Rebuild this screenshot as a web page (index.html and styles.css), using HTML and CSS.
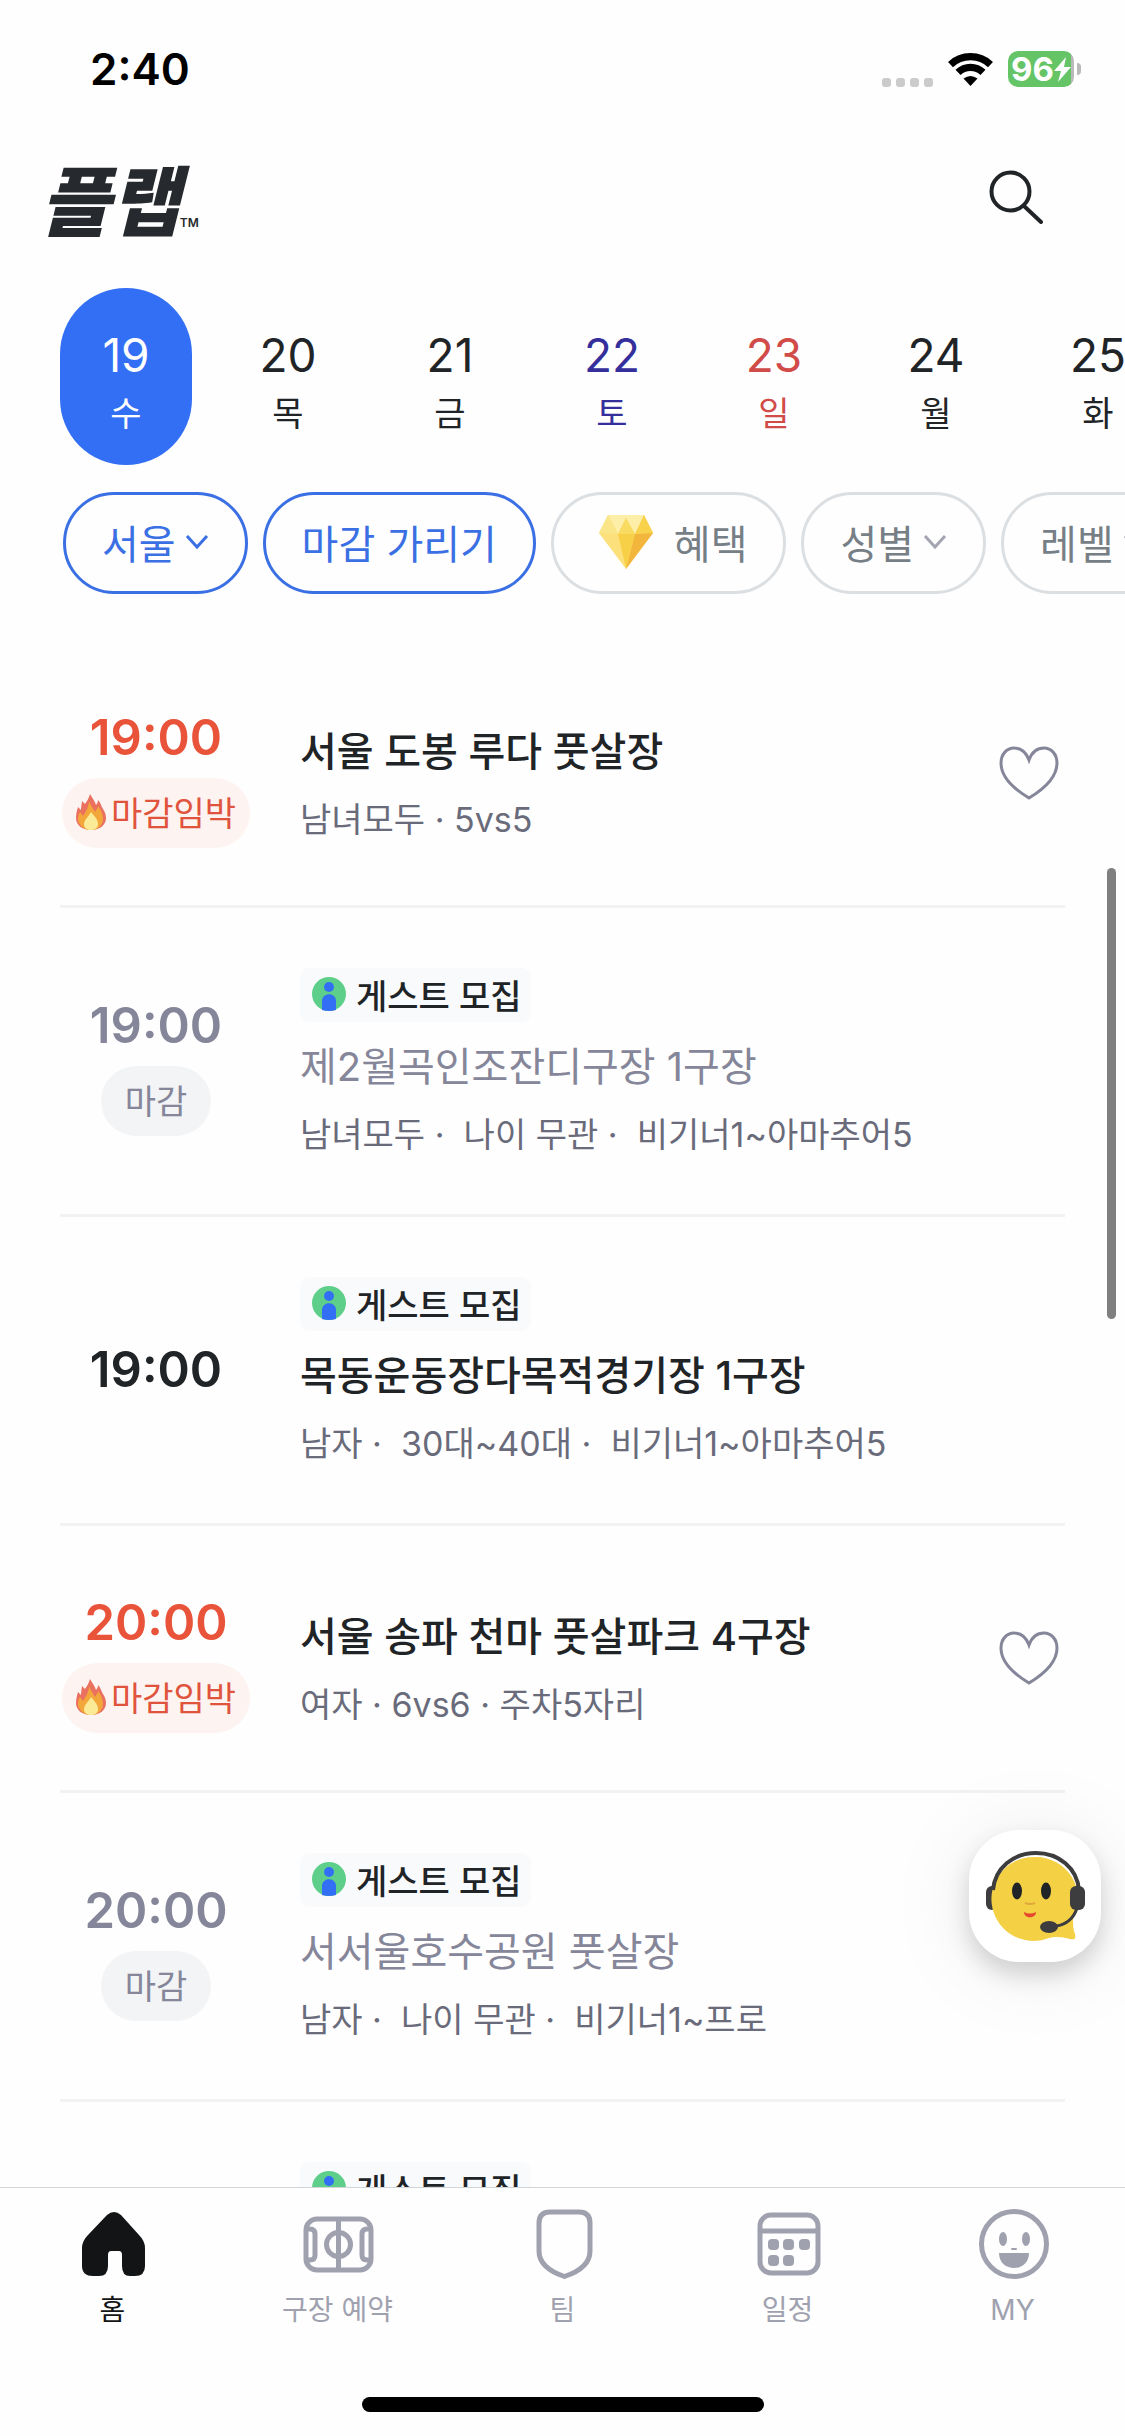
FILE: index.html
```html
<!DOCTYPE html>
<html lang="ko">
<head>
<meta charset="utf-8">
<meta name="viewport" content="width=device-width, initial-scale=1">
<title>플랩</title>
<link rel="stylesheet" href="styles.css">
</head>
<body>
<svg class="defs" aria-hidden="true">
  <symbol id="chevron" viewBox="0 0 24 24"><path d="M2 6l10 11L22 6" fill="none" stroke="currentColor" stroke-width="3"/></symbol>
  <symbol id="fire" viewBox="0 0 30 36">
    <path d="M14 0c2 4 5 7 6 11 1-1 2-3 2-5 3 3 3 6 5 9 2 3 3 6 3 9 0 7-6 12-15 12S0 31 0 24c0-4 1-8 2-11l3 3c0-4 1-7 1-9l3 3c2-3 4-6 5-10z" fill="#ea7060"/>
    <path d="M13 7c1 4 4 7 6 11 1-2 3-4 3-6 3 4 5 8 5 13 0 6-5 11-12 11S2 31 2 25c0-3 1-5 2-7l3 4c3-5 6-9 6-15z" fill="#f3a73a"/>
    <path d="M15 18c3 4 7 7 7 12 0 4-3 6-7 6s-7-2-7-6c0-4 5-8 7-12z" fill="#fbeb96"/>
  </symbol>
  <symbol id="guest" viewBox="0 0 34 34">
    <circle cx="17" cy="17" r="17" fill="#5ecf8a"/>
    <circle cx="17" cy="10" r="5" fill="#336ff5"/>
    <path d="M10 33V24c0-9 14-9 14 0v9q-7 2-14 0z" fill="#336ff5"/>
  </symbol>
  <symbol id="heart" viewBox="0 0 60 54"><path d="M30 14C26 3 19 2 15 2 8 2 2 8 2 17c0 14 13 26 28 35 15-9 28-21 28-35 0-9-6-15-13-15-4 0-11 1-15 12z" fill="none" stroke="currentColor" stroke-width="3"/></symbol>
</svg>

<div class="app">
  <div class="status">
    <span class="clock">2:40</span>
    <div class="signals">
      <svg width="51" height="9" viewBox="0 0 51 9" class="dots" fill="#cbcbcb"><rect width="9" height="9" rx="3"/><rect x="14" width="9" height="9" rx="3"/><rect x="28" width="9" height="9" rx="3"/><rect x="42" width="9" height="9" rx="3"/></svg>
      <svg width="45" height="33" viewBox="0 0 45 33"><path d="M2.500 11.600A29.300 29.300 0 0 1 42.500 11.600M10 19.400A18 18 0 0 1 35 19.400" fill="none" stroke="#000" stroke-width="7.200"/><path d="M22.500 33l-7-7.500q7-5 14 0z"/></svg>
      <span class="battery"><span class="level">96<svg width="17" height="25" viewBox="0 0 17 25" fill="#fff"><path d="M12 0L0 14h7L4 25 17 10h-7z"/></svg></span></span>
    </div>
  </div>

  <header class="header">
    <a class="logo" href="#">플랩<span class="tm">TM</span></a>
    <button class="icon-button" aria-label="검색"><svg width="54" height="54" viewBox="0 0 54 54" fill="none" stroke="#212427" stroke-width="4" stroke-linecap="round"><circle cx="21.500" cy="21.500" r="19"/><path d="M35 36l17 16"/></svg></button>
  </header>

  <nav class="dates" aria-label="날짜">
    <button class="date selected"><span class="day">19</span><span class="weekday">수</span></button>
    <button class="date"><span class="day">20</span><span class="weekday">목</span></button>
    <button class="date"><span class="day">21</span><span class="weekday">금</span></button>
    <button class="date saturday"><span class="day">22</span><span class="weekday">토</span></button>
    <button class="date sunday"><span class="day">23</span><span class="weekday">일</span></button>
    <button class="date"><span class="day">24</span><span class="weekday">월</span></button>
    <button class="date"><span class="day">25</span><span class="weekday">화</span></button>
  </nav>

  <div class="filters">
    <button class="filter active">서울<svg class="chevron"><use href="#chevron"/></svg></button>
    <button class="filter active">마감 가리기</button>
    <button class="filter benefit"><svg width="54" height="54" viewBox="0 0 54 54"><path d="M9 0h36l9 18-27 36L0 18z" fill="#fbe07c"/><path d="M9 0h36l-9 19-9-16-8 16z" fill="#fdeea8"/><path d="M0 18L9 0l10 19z" fill="#fae588"/><path d="M45 0l9 18-18 1z" fill="#f9d24c"/><path d="M27 3l9 16H19z" fill="#fadb62"/><path d="M19 19h17l-9 35z" fill="#f8d048"/><path d="M36 19l18-1-27 36z" fill="#f2b63c"/></svg>혜택</button>
    <button class="filter">성별<svg class="chevron"><use href="#chevron"/></svg></button>
    <button class="filter">레벨<svg class="chevron"><use href="#chevron"/></svg></button>
  </div>

  <main class="matches">
    <ul class="list">
      <li class="match urgent">
        <div class="when"><time>19:00</time><span class="badge"><svg width="30" height="36"><use href="#fire"/></svg>마감임박</span></div>
        <div class="info"><h2>서울 도봉 루다 풋살장</h2><p>남녀모두 · 5vs5</p></div>
        <button class="icon-button like" aria-label="찜하기"><svg width="60" height="54"><use href="#heart"/></svg></button>
      </li>
      <li class="match closed">
        <div class="when"><time>19:00</time><span class="badge">마감</span></div>
        <div class="info"><span class="guest"><svg width="34" height="34"><use href="#guest"/></svg>게스트 모집</span><h2>제2월곡인조잔디구장 1구장</h2><p>남녀모두 ·&nbsp; 나이 무관 ·&nbsp; 비기너1~아마추어5</p></div>
      </li>
      <li class="match">
        <div class="when"><time>19:00</time></div>
        <div class="info"><span class="guest"><svg width="34" height="34"><use href="#guest"/></svg>게스트 모집</span><h2>목동운동장다목적경기장 1구장</h2><p>남자 ·&nbsp; 30대~40대 ·&nbsp; 비기너1~아마추어5</p></div>
      </li>
      <li class="match urgent">
        <div class="when"><time>20:00</time><span class="badge"><svg width="30" height="36"><use href="#fire"/></svg>마감임박</span></div>
        <div class="info"><h2>서울 송파 천마 풋살파크 4구장</h2><p>여자 · 6vs6 · 주차5자리</p></div>
        <button class="icon-button like" aria-label="찜하기"><svg width="60" height="54"><use href="#heart"/></svg></button>
      </li>
      <li class="match closed">
        <div class="when"><time>20:00</time><span class="badge">마감</span></div>
        <div class="info"><span class="guest"><svg width="34" height="34"><use href="#guest"/></svg>게스트 모집</span><h2>서서울호수공원 풋살장</h2><p>남자 ·&nbsp; 나이 무관 ·&nbsp; 비기너1~프로</p></div>
      </li>
      <li class="match">
        <div class="when"></div>
        <div class="info"><span class="guest"><svg width="34" height="34"><use href="#guest"/></svg>게스트 모집</span></div>
      </li>
    </ul>
    <button class="support" aria-label="고객센터"><svg width="132" height="132" viewBox="0 0 132 132">
      <rect x="17" y="56" width="12" height="24" rx="6" fill="#3d3d3f"/>
      <path d="M67 27a42 42 0 1 0 10 82c8-3 16-2 24 0 5 1 6-1 5-5-2-5-2-9-2-15A42 42 0 0 0 67 27z" fill="#f4d045"/>
      <path d="M24 60C26 38 44 23 67 23s41 15 43 37" fill="none" stroke="#3d3d3f" stroke-width="4"/>
      <path d="M108 78c-3 10-11 17-21 18" fill="none" stroke="#3d3d3f" stroke-width="3"/>
      <rect x="101" y="56" width="15" height="24" rx="6" fill="#3d3d3f"/>
      <ellipse cx="80" cy="97" rx="9" ry="6" fill="#3d3d3f"/>
      <ellipse cx="48" cy="61" rx="5" ry="8.500" fill="#212427"/><ellipse cx="77" cy="61" rx="5" ry="8.500" fill="#212427"/>
      <path d="M56 73q5 2 10 0" fill="none" stroke="#e0a83c" stroke-width="2"/>
      <path d="M55 82q6 3 12 0c0 7-12 7-12 0z" fill="#e5472f"/>
    </svg></button>
    <div class="scrollbar"></div>
  </main>

  <footer class="bottom">
    <nav class="tabs" aria-label="메뉴">
      <a href="#" class="tab current"><svg class="tab-icon" viewBox="0 0 72 72"><path d="M30 7q7-6 14 0l18 20q6 6 6 13v18q0 10-10 10h-5q-8 0-8-10V47q0-4-3-4h-8q-3 0-3 4v11q0 10-9 10h-6Q5 68 5 58V40q0-7 6-13z" fill="currentColor"/></svg>홈</a>
      <a href="#" class="tab"><svg class="tab-icon" viewBox="0 0 72 72" fill="none" stroke="currentColor" stroke-width="5"><rect x="4" y="11" width="65" height="51" rx="11"/><path d="M36.500 11v51M4 21h4q5 0 5 5v21q0 5-5 5H4M69 21h-4q-5 0-5 5v21q0 5 5 5h4"/><circle cx="36.500" cy="36.500" r="12"/></svg>구장 예약</a>
      <a href="#" class="tab"><svg class="tab-icon" viewBox="0 0 72 72" fill="none" stroke="currentColor" stroke-width="5"><path d="M12 15q0-11 11-11h29q11 0 11 11v28c0 13-12 21-25.500 25.500C24 64 12 56 12 43z"/></svg>팀</a>
      <a href="#" class="tab"><svg class="tab-icon" viewBox="0 0 72 72" fill="none" stroke="currentColor" stroke-width="5"><rect x="8" y="7" width="58" height="58" rx="11"/><path d="M8 23h58"/><g fill="currentColor" stroke="none"><rect x="16" y="31" width="11" height="11" rx="4"/><rect x="31" y="31" width="11" height="11" rx="4"/><rect x="47" y="31" width="11" height="11" rx="4"/><rect x="16" y="47" width="11" height="11" rx="4"/><rect x="31" y="47" width="11" height="11" rx="4"/></g></svg>일정</a>
      <a href="#" class="tab"><svg class="tab-icon" viewBox="0 0 72 72"><circle cx="37" cy="36" r="32.500" fill="none" stroke="currentColor" stroke-width="5"/><g fill="currentColor"><ellipse cx="26" cy="31" rx="4" ry="7"/><ellipse cx="49" cy="31" rx="4" ry="7"/><rect x="34" y="40" width="6" height="2" rx="1"/><path d="M22 45h30c0 20-30 20-30 0z"/></g></svg>MY</a>
    </nav>
    <div class="home-indicator"></div>
  </footer>
</div>
</body>
</html>
```
FILE: styles.css
```css
* {
  box-sizing: border-box;
}

body {
  margin: 0;
  background: #fefefe;
  color: #212427;
  font-family: Inter, "Noto Sans CJK KR", sans-serif;
}

button {
  padding: 0;
  border: 0;
  background: none;
  color: inherit;
  font: inherit;
}

a {
  color: inherit;
  text-decoration: none;
}

svg {
  display: block;
  flex: none;
}

.defs {
  display: none;
}

.app {
  display: flex;
  flex-direction: column;
  height: 100vh;
  overflow: hidden;
}

/* Status bar */
.status {
  display: flex;
  align-items: center;
  justify-content: space-between;
  height: 138px;
  padding: 0 44px 0 90px;
  color: #000;
}

.clock {
  font-size: 44px;
  font-weight: 600;
}

.signals {
  display: flex;
  align-items: center;
  gap: 15px;
}

.dots {
  align-self: flex-end;
}

.battery {
  display: flex;
  align-items: center;
  gap: 3px;
}

.battery::after {
  content: "";
  width: 4px;
  height: 12px;
  border-radius: 0 4px 4px 0;
  background: #b9b9b9;
}

.level {
  display: flex;
  align-items: center;
  justify-content: center;
  width: 66px;
  height: 36px;
  border-radius: 10px;
  background: linear-gradient(90deg, #65c466 95%, #b9b9b9 95%);
  color: #fff;
  font-size: 33px;
  font-weight: 700;
}

/* Header */
.header {
  display: flex;
  align-items: center;
  justify-content: space-between;
  height: 120px;
  padding: 0 82px 2px 40px;
}

.logo {
  display: flex;
  align-items: flex-end;
  color: #26292d;
  font-family: "Noto Sans CJK KR", sans-serif;
  font-size: 76px;
  font-style: italic;
  font-weight: 900;
  line-height: 68px;
}

.tm {
  font-family: Inter, sans-serif;
  font-size: 12px;
  font-style: normal;
  font-weight: 600;
  line-height: 16px;
}

/* Date strip */
.dates {
  display: flex;
  gap: 30px;
  padding: 30px 0 0 60px;
}

.date {
  display: flex;
  flex: none;
  flex-direction: column;
  align-items: center;
  justify-content: center;
  width: 132px;
  height: 177px;
  padding-top: 8px;
  border-radius: 66px;
}

.day {
  font-size: 46px;
  line-height: 66px;
}

.weekday {
  font-size: 34px;
  line-height: 51px;
}

.selected {
  background: #336ff5;
  color: #fff;
}

.saturday {
  color: #352f9c;
}

.sunday {
  color: #d14b48;
}

/* Filters */
.filters {
  display: flex;
  gap: 15px;
  padding: 27px 0 47px 63px;
}

.filter {
  display: flex;
  flex: none;
  align-items: center;
  gap: 9px;
  height: 102px;
  padding: 0 36px 3px;
  border: 3px solid #dcdfe2;
  border-radius: 51px;
  color: #777f86;
  font-size: 40px;
}

.active {
  border-color: #3b70e4;
  color: #3b70e4;
}

.benefit {
  gap: 21px;
  padding-left: 45px;
}

.chevron {
  width: 24px;
  height: 24px;
}

.filter:not(.active) .chevron {
  color: #a4a5b2;
}

/* Match list */
.matches {
  position: relative;
  flex: 1;
  min-height: 0;
  overflow: hidden;
}

.list {
  margin: 0;
  padding: 0 60px;
  list-style: none;
}

.match {
  display: grid;
  grid-template-columns: 192px 1fr auto;
  align-items: center;
  column-gap: 48px;
  padding: 57px 0;
  border-bottom: 3px solid #f0f2f3;
}

.when {
  display: flex;
  flex-direction: column;
  align-items: center;
}

.when time {
  font-size: 49px;
  font-weight: 600;
  line-height: 80px;
}

.badge {
  display: flex;
  align-items: center;
  gap: 5px;
  height: 70px;
  padding: 0 24px 3px;
  border-radius: 35px;
  background: #f2f4f6;
  color: #858699;
  font-size: 34px;
}

.urgent time {
  color: #e8533a;
}

.urgent .badge {
  padding: 0 14px 3px;
  background: #fdf4f1;
  color: #e0533c;
}

.info {
  display: flex;
  flex-direction: column;
  align-items: flex-start;
  padding-top: 3px;
}

.info h2 {
  margin: 15px 0;
  font-size: 40px;
  font-weight: 500;
  line-height: 60px;
}

.info p {
  margin: 0;
  color: #696b7b;
  font-size: 34px;
  line-height: 45px;
}

.closed time,
.closed h2 {
  color: #858699;
}

.closed h2 {
  font-weight: 400;
}

.guest {
  display: flex;
  align-items: center;
  gap: 10px;
  height: 54px;
  padding: 0 10px 2px 12px;
  border-radius: 9px;
  background: #f8fafc;
  font-size: 34px;
  font-weight: 500;
}

.like {
  padding-right: 6px;
  color: #858699;
}

.support {
  position: absolute;
  right: 24px;
  bottom: 225px;
  border-radius: 50px;
  background: #fff;
  box-shadow: 0 12px 24px rgba(0, 0, 0, 0.16), 0 6px 90px rgba(0, 0, 0, 0.08);
}

.scrollbar {
  position: absolute;
  top: 227px;
  right: 9px;
  width: 9px;
  height: 451px;
  border-radius: 5px;
  background: #7f7f7f;
}

/* Bottom navigation */
.bottom {
  border-top: 1px solid #d3d6d9;
}

.tabs {
  display: flex;
  padding-top: 20px;
}

.tab {
  display: flex;
  flex: 1;
  flex-direction: column;
  align-items: center;
  gap: 9px;
  color: #a0a1af;
  font-size: 28px;
  line-height: 42px;
}

.tab-icon {
  width: 72px;
  height: 72px;
}

.current {
  color: #121415;
}

.home-indicator {
  width: 402px;
  height: 15px;
  margin: 66px auto 24px;
  border-radius: 8px;
  background: #000;
}
```
